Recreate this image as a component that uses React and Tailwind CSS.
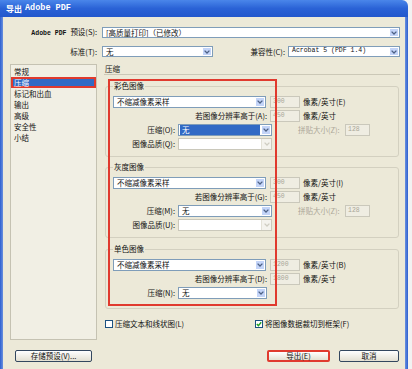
import React from "react";

const CJK = "font-['Noto_Sans_CJK_SC','Noto_Sans',sans-serif]";
const MONO = "font-['Liberation_Mono',monospace]";

function Arrow({ disabled }) {
  return (
    <div
      className={
        disabled
          ? "w-[10px] h-full flex items-center justify-center bg-[#f4f3ee] border-l border-[#e4e2d8]"
          : "w-[10px] h-full flex items-center justify-center bg-[#c3d4f8] border border-white rounded-[1px]"
      }
    >
      <svg width="6" height="4" viewBox="0 0 6 4">
        <path
          d="M0.6 0.6 L3 3 L5.4 0.6"
          stroke={disabled ? "#cfcdc2" : "#4d6185"}
          strokeWidth="1.3"
          fill="none"
        />
      </svg>
    </div>
  );
}

function Select({ w, text, disabled, selected, mono, h = "h-[12px]" }) {
  return (
    <div
      className={`${w} ${h} flex items-stretch border ${
        disabled ? "border-[#cac8bb] bg-white" : "border-[#7f9db9] bg-white"
      }`}
    >
      <div className="flex-1 flex items-center pl-[1px] pr-[1px] overflow-hidden">
        {selected ? (
          <div className="w-full h-full bg-[#316ac5] text-white flex items-center pl-[2px] leading-none">
            {text}
          </div>
        ) : (
          <span className={`pl-[2px] leading-none whitespace-nowrap ${mono ? MONO + " text-[6.5px]" : ""}`}>
            {text}
          </span>
        )}
      </div>
      <Arrow disabled={disabled} />
    </div>
  );
}

function DisInput({ w, value }) {
  return (
    <div
      className={`${w} h-[12px] border border-[#cac8bb] bg-[#efede2] flex items-center pl-[2px] text-[#a9a697] text-[6.5px] ${MONO}`}
    >
      {value}
    </div>
  );
}

function Group({ title, mt, pb = "pb-[6px]", children }) {
  return (
    <fieldset
      className={`${mt} ${pb} ml-[1px] w-[294px] border border-[#d3d0c0] rounded-[3px] pl-[7px] pt-[5px]`}
    >
      <legend className="px-[1px] leading-[10px] text-[7.5px]">{title}</legend>
      <div className="flex flex-col gap-[2px]">{children}</div>
    </fieldset>
  );
}

function Row({ children }) {
  return <div className="h-[12px] flex items-center">{children}</div>;
}

function Label({ w, children, gray }) {
  return (
    <div className={`${w} text-right pr-[3px] leading-none whitespace-nowrap ${gray ? "text-[#aca899]" : ""}`}>
      {children}
    </div>
  );
}

function Checkbox({ checked }) {
  return (
    <div className="w-[8px] h-[8px] border border-[#1c5180] bg-white flex items-center justify-center">
      {checked && (
        <svg width="6" height="6" viewBox="0 0 6 6">
          <path d="M0.8 3 L2.4 4.6 L5.2 1.2" stroke="#21a121" strokeWidth="1.4" fill="none" />
        </svg>
      )}
    </div>
  );
}

function Button({ w, children, red }) {
  return (
    <div
      className={`${w} h-[12px] flex items-center justify-center rounded-[2px] bg-linear-to-b from-white to-[#e3e0d2] leading-none ${
        red ? "border-2 border-[#e03a2e]" : "border border-[#33475f]"
      }`}
    >
      {children}
    </div>
  );
}

export default function App() {
  return (
    <div className={`w-[412px] h-[369px] flex flex-col overflow-hidden bg-[#f2f2f2] text-[#111] text-[7.5px] ${CJK}`}>
      {/* title bar */}
      <div className="flex h-[17px]">
        <div className="w-[408px] h-full rounded-tr-[6px] bg-linear-to-b from-[#4a86ea] via-[#2a62d6] to-[#2257cc] flex items-center pl-[6px] text-white font-bold">
          <span className="text-[8px]">导出</span>
          <span className={`${MONO} text-[8.5px] ml-[3px]`}>Adobe PDF</span>
        </div>
        <div className="flex-1" />
      </div>

      {/* body */}
      <div className="flex flex-1">
        <div className="w-[3px] bg-linear-to-r from-[#2d5fd0] to-[#6a90de]" />
        <div className="w-[402px] bg-[#ece9d8] flex flex-col pt-[10px]">
          {/* row 1 */}
          <div className="h-[11px] flex items-center">
            <div className="w-[94px] text-right leading-none whitespace-nowrap">
              <span className={`${MONO} text-[6.5px] font-bold`}>Adobe PDF </span>
              <span>预设(S):</span>
            </div>
            <div className="ml-[5px]">
              <Select w="w-[298px]" h="h-[11px]" text="[高质量打印]（已修改）" />
            </div>
          </div>
          {/* row 2 */}
          <div className="mt-[8px] h-[11px] flex items-center">
            <div className="w-[94px] text-right leading-none">标准(T):</div>
            <div className="ml-[5px]">
              <Select w="w-[111px]" h="h-[11px]" text="无" />
            </div>
            <div className="w-[72px] text-right leading-none">兼容性(C):</div>
            <div className="ml-[3px]">
              <Select w="w-[112px]" h="h-[11px]" text="Acrobat 5 (PDF 1.4)" mono />
            </div>
          </div>

          {/* main */}
          <div className="mt-[7px] h-[276px] flex">
            <div className="ml-[7px] w-[87px] h-full border border-[#c5c2b2] bg-[#f1efe4] pt-[1px] flex flex-col">
              {["常规", "压缩", "标记和出血", "输出", "高级", "安全性", "小结"].map((t) => (
                <div
                  key={t}
                  className={
                    t === "压缩"
                      ? "h-[11px] px-[3px] flex items-center leading-none bg-[#316ac5] text-white shadow-[inset_0_0_0_2px_#e03a2e]"
                      : "h-[11px] px-[3px] flex items-center leading-none"
                  }
                >
                  {t}
                </div>
              ))}
            </div>

            <div className="ml-[7px] w-[296px] relative flex flex-col">
              <div className="h-[11px] leading-[10px] pl-[1px] border-b border-[#cbc8b7]">压缩</div>

              <Group title="彩色图像" mt="mt-[6px]">
                <Row>
                  <Select w="w-[153px]" text="不缩减像素采样" />
                  <div className="ml-[4px]"><DisInput w="w-[30px]" value="300" /></div>
                  <span className="ml-[3px] leading-none">像素/英寸(E)</span>
                </Row>
                <Row>
                  <Label w="w-[157px]">若图像分辨率高于(A):</Label>
                  <DisInput w="w-[30px]" value="450" />
                  <span className="ml-[3px] leading-none">像素/英寸</span>
                </Row>
                <Row>
                  <Label w="w-[65px]">压缩(O):</Label>
                  <Select w="w-[94px]" text="无" selected />
                  <div className="ml-[26px] w-[45px] leading-none text-[#aca899] whitespace-nowrap">拼贴大小(Z):</div>
                  <div className="ml-[2px]"><DisInput w="w-[25px]" value="128" /></div>
                </Row>
                <Row>
                  <Label w="w-[65px]">图像品质(Q):</Label>
                  <Select w="w-[94px]" text="" disabled />
                </Row>
              </Group>

              <Group title="灰度图像" mt="mt-[5px]">
                <Row>
                  <Select w="w-[153px]" text="不缩减像素采样" />
                  <div className="ml-[4px]"><DisInput w="w-[30px]" value="300" /></div>
                  <span className="ml-[3px] leading-none">像素/英寸(I)</span>
                </Row>
                <Row>
                  <Label w="w-[157px]">若图像分辨率高于(G):</Label>
                  <DisInput w="w-[30px]" value="450" />
                  <span className="ml-[3px] leading-none">像素/英寸</span>
                </Row>
                <Row>
                  <Label w="w-[65px]">压缩(M):</Label>
                  <Select w="w-[94px]" text="无" />
                  <div className="ml-[26px] w-[45px] leading-none text-[#aca899] whitespace-nowrap">拼贴大小(Z):</div>
                  <div className="ml-[2px]"><DisInput w="w-[25px]" value="128" /></div>
                </Row>
                <Row>
                  <Label w="w-[65px]">图像品质(U):</Label>
                  <Select w="w-[94px]" text="" disabled />
                </Row>
              </Group>

              <Group title="单色图像" mt="mt-[6px]" pb="pb-[9px]">
                <Row>
                  <Select w="w-[153px]" text="不缩减像素采样" />
                  <div className="ml-[4px]"><DisInput w="w-[30px]" value="1200" /></div>
                  <span className="ml-[3px] leading-none">像素/英寸(B)</span>
                </Row>
                <Row>
                  <Label w="w-[157px]">若图像分辨率高于(D):</Label>
                  <DisInput w="w-[30px]" value="1800" />
                  <span className="ml-[3px] leading-none">像素/英寸</span>
                </Row>
                <Row>
                  <Label w="w-[65px]">压缩(N):</Label>
                  <Select w="w-[89px]" text="无" />
                </Row>
              </Group>

              <div className="mt-[10px] h-[9px] flex items-center">
                <div className="ml-[1px] w-[150px] flex items-center">
                  <Checkbox />
                  <span className="ml-[2px] leading-none">压缩文本和线状图(L)</span>
                </div>
                <Checkbox checked />
                <span className="ml-[2px] leading-none">将图像数据裁切到框架(F)</span>
              </div>

              <div className="absolute left-[4px] top-[15px] w-[169px] h-[227px] border-2 border-[#e03a2e] pointer-events-none" />
            </div>
          </div>

          {/* buttons */}
          <div className="mt-[10px] flex items-center pr-[6px]">
            <div className="ml-[12px]">
              <Button w="w-[77px]">存储预设(V)...</Button>
            </div>
            <div className="ml-auto">
              <Button w="w-[63px]" red>导出(E)</Button>
            </div>
            <div className="ml-[9px]">
              <Button w="w-[60px]">取消</Button>
            </div>
          </div>
        </div>
        <div className="w-[3px] bg-linear-to-r from-[#6a90de] to-[#2d5fd0]" />
        <div className="flex-1" />
      </div>
    </div>
  );
}
